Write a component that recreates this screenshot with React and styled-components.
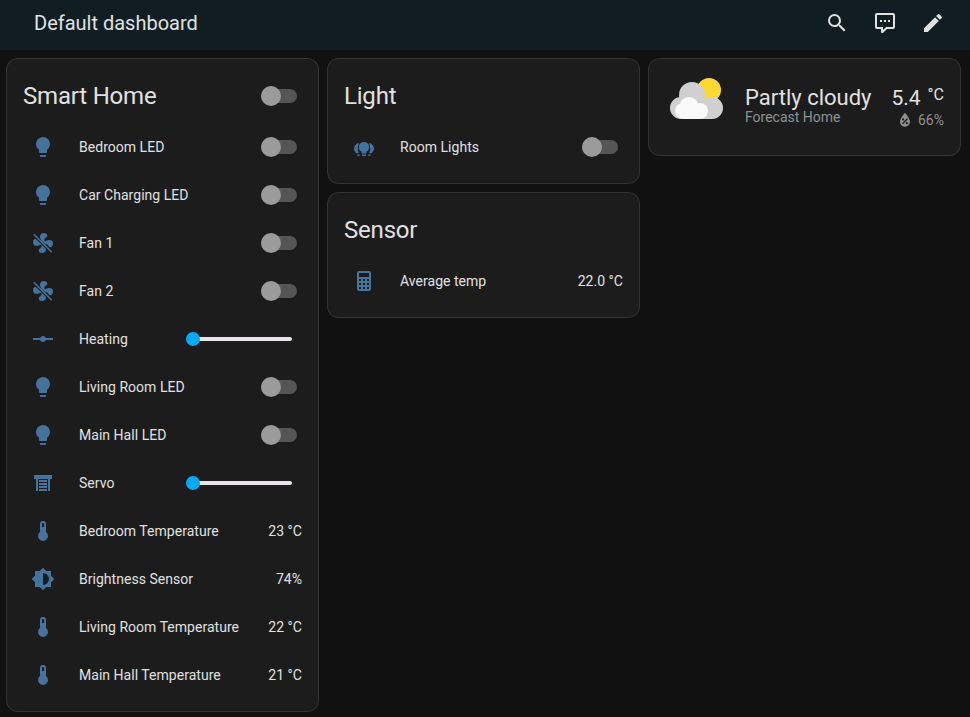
import styled, { createGlobalStyle } from 'styled-components'

const GlobalStyle = createGlobalStyle`
  html, body {
    margin: 0;
    padding: 0;
    background: #111111;
  }
  body {
    font-family: Roboto, 'Liberation Sans', sans-serif;
    color: #e1e1e1;
  }
  * {
    box-sizing: border-box;
  }
`

const icons = {
  bulb: 'M12,2A7,7 0 0,0 5,9C5,11.38 6.19,13.47 8,14.74V17A1,1 0 0,0 9,18H15A1,1 0 0,0 16,17V14.74C17.81,13.47 19,11.38 19,9A7,7 0 0,0 12,2M9,21A1,1 0 0,0 10,22H14A1,1 0 0,0 15,21V20H9V21Z',
  vertex: 'M2,11H9.17C9.58,9.83 10.69,9 12,9C13.31,9 14.42,9.83 14.83,11H22V13H14.83C14.42,14.17 13.31,15 12,15C10.69,15 9.58,14.17 9.17,13H2V11Z',
  shutter: 'M3 4H21V8H19V20H17V8H7V20H5V8H3V4M8 9H16V11H8V9M8 12H16V14H8V12M8 15H16V17H8V15M8 18H16V20H8V18Z',
  thermometer: 'M15 13V5A3 3 0 0 0 9 5V13A5 5 0 1 0 15 13M12 4A1 1 0 0 1 13 5V8H11V5A1 1 0 0 1 12 4Z',
  brightness: 'M12,18V6A6,6 0 0,1 18,12A6,6 0 0,1 12,18M20,15.31L23.31,12L20,8.69V4H15.31L12,0.69L8.69,4H4V8.69L0.69,12L4,15.31V20H8.69L12,23.31L15.31,20H20V15.31Z',
  calculator: 'M7,2H17A2,2 0 0,1 19,4V20A2,2 0 0,1 17,22H7A2,2 0 0,1 5,20V4A2,2 0 0,1 7,2M7,4V8H17V4H7M7,10V12H9V10H7M11,10V12H13V10H11M15,10V12H17V10H15M7,14V16H9V14H7M11,14V16H13V14H11M15,14V16H17V14H15M7,18V20H9V18H7M11,18V20H13V18H11M15,18V20H17V18H15Z',
  group: 'M12 7A5.2 5.2 0 0 0 9.6 16.8V18.5H14.4V16.8A5.2 5.2 0 0 0 12 7M10 19.5H14V21H10V19.5M5.8 8C3.5 9.5 2 11.5 2 13.5C2 15.5 3.2 17.3 5 18.5L6.8 18C6 16.5 5.8 15 5.8 13.5C5.8 11.5 6.2 9.8 7 8.8L5.8 8M18.2 8L17 8.8C17.8 9.8 18.2 11.5 18.2 13.5C18.2 15 18 16.5 17.2 18L19 18.5C20.8 17.3 22 15.5 22 13.5C22 11.5 20.5 9.5 18.2 8M5.2 19.5H7.6V21H5.6L5.2 19.5M16.4 19.5H18.8L18.4 21H16.4V19.5Z',
  magnify: 'M9.5,3A6.5,6.5 0 0,1 16,9.5C16,11.11 15.41,12.59 14.44,13.73L14.71,14H15.5L20.5,19L19,20.5L14,15.5V14.71L13.73,14.44C12.59,15.41 11.11,16 9.5,16A6.5,6.5 0 0,1 3,9.5A6.5,6.5 0 0,1 9.5,3M9.5,5C7,5 5,7 5,9.5C5,12 7,14 9.5,14C12,14 14,12 14,9.5C14,7 12,5 9.5,5Z',
  comment: 'M9,22A1,1 0 0,1 8,21V18H4A2,2 0 0,1 2,16V4C2,2.89 2.9,2 4,2H20A2,2 0 0,1 22,4V16A2,2 0 0,1 20,18H13.9L10.2,21.71C10,21.9 9.75,22 9.5,22V22H9M10,16V19.08L13.08,16H20V4H4V16H10M17,11H15V9H17V11M13,11H11V9H13V11M9,11H7V9H9V11Z',
  pencil: 'M20.71,7.04C21.1,6.65 21.1,6 20.71,5.63L18.37,3.29C18,2.9 17.35,2.9 16.96,3.29L15.12,5.12L18.87,8.87M3,17.25V21H6.75L17.81,9.93L14.06,6.18L3,17.25Z',
  water: 'M12,3.25C12,3.25 6,10 6,14C6,17.32 8.69,20 12,20A6,6 0 0,0 18,14C18,10 12,3.25 12,3.25M14.47,9.97L15.53,11.03L9.53,17.03L8.47,15.97M9.75,10A1.25,1.25 0 0,1 11,11.25A1.25,1.25 0 0,1 9.75,12.5A1.25,1.25 0 0,1 8.5,11.25A1.25,1.25 0 0,1 9.75,10M14.25,14.5A1.25,1.25 0 0,1 15.5,15.75A1.25,1.25 0 0,1 14.25,17A1.25,1.25 0 0,1 13,15.75A1.25,1.25 0 0,1 14.25,14.5Z',
}

const fanPath =
  'M12.5,2C17,2 17.11,5.57 14.75,6.75C13.76,7.24 13.32,8.29 13.13,9.22C13.61,9.42 14.03,9.73 14.35,10.13C18.05,8.13 22.03,8.92 22.03,12.5C22.03,17 18.46,17.1 17.28,14.73C16.78,13.74 15.72,13.3 14.79,13.11C14.59,13.59 14.28,14 13.88,14.34C15.87,18.03 15.08,22 11.5,22C7,22 6.91,18.42 9.27,17.24C10.25,16.75 10.69,15.71 10.89,14.79C10.4,14.59 9.97,14.27 9.65,13.87C5.96,15.85 2,15.07 2,11.5C2,7 5.56,6.89 6.74,9.26C7.24,10.25 8.29,10.68 9.22,10.87C9.41,10.39 9.73,9.97 10.14,9.65C8.15,5.96 8.94,2 12.5,2Z'

const Page = styled.div`
  min-height: 100vh;
  background: #111111;
`

const Header = styled.header`
  display: flex;
  align-items: center;
  height: 50px;
  padding: 0 13px 4px 34px;
  background: #101e24;
`

const HeaderTitle = styled.div`
  flex: 1;
  font-size: 20px;
  font-weight: 400;
  color: #e1e1e1;
`

const HeaderButton = styled.div`
  display: flex;
  justify-content: center;
  width: 48px;
  color: #e1e1e1;
`

const Svg = styled.svg`
  display: block;
  width: ${(props) => props.$size || 24}px;
  height: ${(props) => props.$size || 24}px;
  fill: currentColor;
`

const Grid = styled.main`
  display: grid;
  grid-template-columns: repeat(3, 313px);
  column-gap: 8px;
  align-items: start;
  padding: 8px 0 0 6px;
`

const Column = styled.div`
  display: flex;
  flex-direction: column;
  row-gap: 8px;
`

const Card = styled.section`
  background: #1c1c1c;
  border: 1px solid rgba(225, 225, 225, 0.12);
  border-radius: 12px;
  padding: 0 16px 16px;
`

const CardHeader = styled.div`
  display: flex;
  align-items: center;
  justify-content: space-between;
  height: 40px;
  margin: 17px 0 11px;
`

const CardTitle = styled.h2`
  margin: 0;
  font-size: 24px;
  font-weight: 400;
  letter-spacing: -0.2px;
  color: #e1e1e1;
`

const Rows = styled.div`
  display: flex;
  flex-direction: column;
  row-gap: 8px;
`

const Row = styled.div`
  display: flex;
  align-items: center;
  height: 40px;
  font-size: 14px;
  letter-spacing: 0.03px;
`

const IconBox = styled.div`
  display: flex;
  align-items: center;
  justify-content: center;
  flex: 0 0 40px;
  height: 40px;
  margin-right: 16px;
  color: #44739e;
`

const RowName = styled.div`
  flex: 1;
  white-space: nowrap;
`

const Switch = styled.div`
  display: flex;
  align-items: center;
  width: 36px;
  height: 14px;
  margin-right: 5px;
  border-radius: 7px;
  background: #555555;
`

const SwitchThumb = styled.div`
  flex: 0 0 20px;
  height: 20px;
  border-radius: 50%;
  background: #9b9b9b;
`

const Slider = styled.div`
  display: flex;
  align-items: center;
  width: 100px;
  height: 4px;
  margin-right: 10px;
  border-radius: 2px;
  background: #e8e4ea;
`

const SliderThumb = styled.div`
  flex: 0 0 14px;
  height: 14px;
  margin-left: -6px;
  border-radius: 50%;
  background: #03a9f4;
`

const WeatherCard = styled(Card)`
  display: flex;
  align-items: flex-start;
  height: 98px;
  padding: 25px 16px 0;
`

const WeatherIcon = styled.svg`
  display: block;
  flex: 0 0 56px;
  width: 56px;
  height: 48px;
  margin: -9px 21px 0 3px;
`

const WeatherInfo = styled.div`
  flex: 1;
  white-space: nowrap;
`

const WeatherName = styled.div`
  font-size: 22px;
  line-height: 28px;
`

const WeatherSub = styled.div`
  margin-top: -3px;
  font-size: 14px;
  line-height: 16px;
  color: #8d9296;
`

const WeatherValues = styled.div`
  display: flex;
  flex-direction: column;
  align-items: flex-end;
`

const Temperature = styled.div`
  display: flex;
  align-items: flex-start;
  font-size: 21px;
  line-height: 28px;
`

const TemperatureUnit = styled.span`
  margin-left: 7px;
  font-size: 16px;
  line-height: 22px;
`

const Humidity = styled.div`
  display: flex;
  align-items: center;
  column-gap: 3px;
  height: 16px;
  font-size: 14px;
  color: #8f8f8f;
`

function Icon({ name, size }) {
  return (
    <Svg viewBox='0 0 24 24' $size={size}>
      <path d={icons[name]} />
    </Svg>
  )
}

function FanOff() {
  return (
    <Svg viewBox='0 0 24 24'>
      <path d={fanPath} />
      <line x1='2.5' y1='3.5' x2='20.5' y2='21.5' stroke='#1c1c1c' strokeWidth='2.8' />
      <line x1='2.8' y1='3.2' x2='20.8' y2='21.2' stroke='currentColor' strokeWidth='1.6' />
    </Svg>
  )
}

function Toggle() {
  return (
    <Switch>
      <SwitchThumb />
    </Switch>
  )
}

function RangeSlider() {
  return (
    <Slider>
      <SliderThumb />
    </Slider>
  )
}

function EntityRow({ icon, name, children }) {
  return (
    <Row>
      <IconBox>{icon === 'fan' ? <FanOff /> : <Icon name={icon} />}</IconBox>
      <RowName>{name}</RowName>
      {children}
    </Row>
  )
}

export default function App() {
  return (
    <Page>
      <GlobalStyle />
      <Header>
        <HeaderTitle>Default dashboard</HeaderTitle>
        <HeaderButton>
          <Icon name='magnify' />
        </HeaderButton>
        <HeaderButton>
          <Icon name='comment' />
        </HeaderButton>
        <HeaderButton>
          <Icon name='pencil' />
        </HeaderButton>
      </Header>

      <Grid>
        <Column>
          <Card>
            <CardHeader>
              <CardTitle>Smart Home</CardTitle>
              <Toggle />
            </CardHeader>
            <Rows>
              <EntityRow icon='bulb' name='Bedroom LED'>
                <Toggle />
              </EntityRow>
              <EntityRow icon='bulb' name='Car Charging LED'>
                <Toggle />
              </EntityRow>
              <EntityRow icon='fan' name='Fan 1'>
                <Toggle />
              </EntityRow>
              <EntityRow icon='fan' name='Fan 2'>
                <Toggle />
              </EntityRow>
              <EntityRow icon='vertex' name='Heating'>
                <RangeSlider />
              </EntityRow>
              <EntityRow icon='bulb' name='Living Room LED'>
                <Toggle />
              </EntityRow>
              <EntityRow icon='bulb' name='Main Hall LED'>
                <Toggle />
              </EntityRow>
              <EntityRow icon='shutter' name='Servo'>
                <RangeSlider />
              </EntityRow>
              <EntityRow icon='thermometer' name='Bedroom Temperature'>
                23 °C
              </EntityRow>
              <EntityRow icon='brightness' name='Brightness Sensor'>
                74%
              </EntityRow>
              <EntityRow icon='thermometer' name='Living Room Temperature'>
                22 °C
              </EntityRow>
              <EntityRow icon='thermometer' name='Main Hall Temperature'>
                21 °C
              </EntityRow>
            </Rows>
          </Card>
        </Column>

        <Column>
          <Card>
            <CardHeader>
              <CardTitle>Light</CardTitle>
            </CardHeader>
            <Rows>
              <EntityRow icon='group' name='Room Lights'>
                <Toggle />
              </EntityRow>
            </Rows>
          </Card>
          <Card>
            <CardHeader>
              <CardTitle>Sensor</CardTitle>
            </CardHeader>
            <Rows>
              <EntityRow icon='calculator' name='Average temp'>
                22.0 °C
              </EntityRow>
            </Rows>
          </Card>
        </Column>

        <Column>
          <WeatherCard>
            <WeatherIcon viewBox='0 0 56 48'>
              <circle cx='41' cy='15' r='12' fill='#fdd835' />
              <g fill='#d0d0d0'>
                <circle cx='24' cy='20' r='13' />
                <circle cx='13' cy='33' r='11' />
                <circle cx='44' cy='33' r='11' />
                <rect x='13' y='26' width='31' height='18' />
              </g>
              <g fill='#f9f9f9'>
                <circle cx='21' cy='31.5' r='9.5' />
                <circle cx='15' cy='36' r='8' />
                <circle cx='32' cy='36' r='8' />
                <rect x='15' y='34' width='17' height='10' />
              </g>
            </WeatherIcon>
            <WeatherInfo>
              <WeatherName>Partly cloudy</WeatherName>
              <WeatherSub>Forecast Home</WeatherSub>
            </WeatherInfo>
            <WeatherValues>
              <Temperature>
                5.4<TemperatureUnit>°C</TemperatureUnit>
              </Temperature>
              <Humidity>
                <Icon name='water' size={20} />
                66%
              </Humidity>
            </WeatherValues>
          </WeatherCard>
        </Column>
      </Grid>
    </Page>
  )
}
